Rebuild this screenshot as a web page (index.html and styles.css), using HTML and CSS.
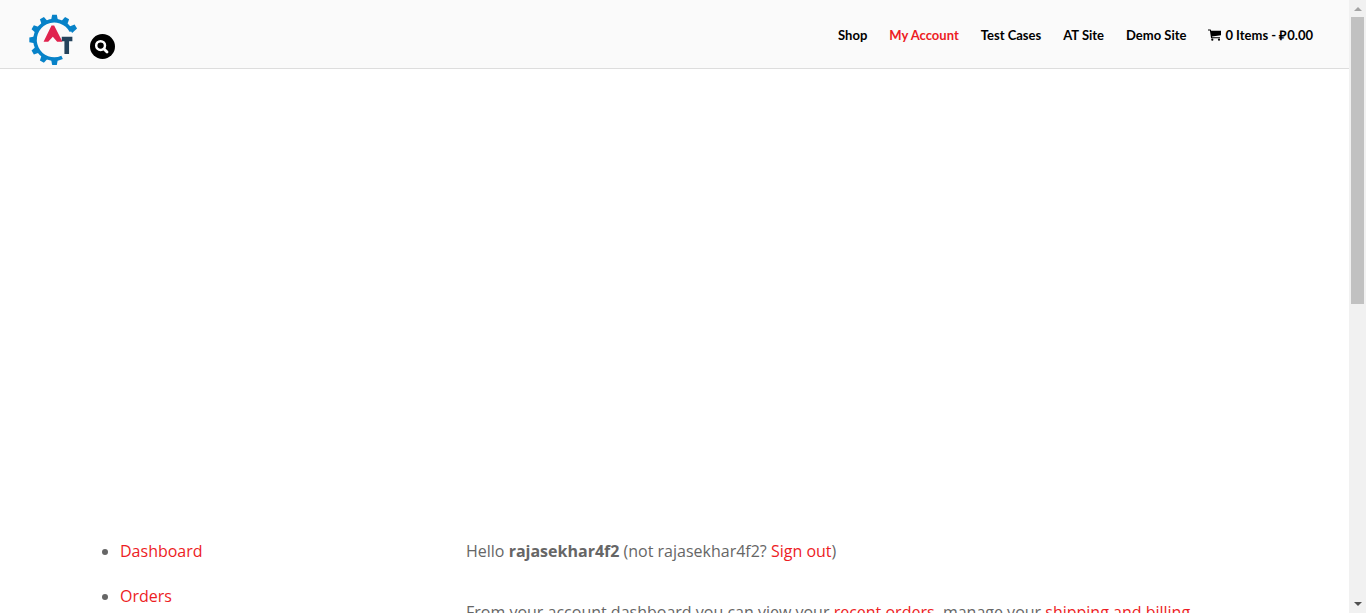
FILE: index.html
```html
<!DOCTYPE html>
<html lang="en">
<head>
<meta charset="utf-8">
<title>My Account</title>
<link rel="stylesheet" href="styles.css">
</head>
<body>
<div class="page">
  <header class="header">
    <div class="brand">
      <a class="logo" href="#" aria-label="AT home">
        <svg viewBox="12 13 148 154" aria-hidden="true">
          <path d="M112 144A58 58 0 1 1 140 65" fill="none" stroke="#0782c8" stroke-width="11"/>
          <g fill="#0782c8">
            <path id="tooth" d="M78 35L82 15h14l4 20z"/>
            <use href="#tooth" transform="rotate(30 89 91)"/>
            <use href="#tooth" transform="rotate(58 89 91)"/>
            <use href="#tooth" transform="rotate(-30 89 91)"/>
            <use href="#tooth" transform="rotate(-60 89 91)"/>
            <use href="#tooth" transform="rotate(-90 89 91)"/>
            <use href="#tooth" transform="rotate(-120 89 91)"/>
            <use href="#tooth" transform="rotate(-150 89 91)"/>
            <use href="#tooth" transform="rotate(-180 89 91)"/>
          </g>
          <path d="M56 97L80 48h8l25 49H97L84 82 70 97z" fill="#e0234e"/>
          <path d="M111 82h32v13h-10v39h-14V95h-8z" fill="#24435c"/>
        </svg>
      </a>
      <button class="search" type="button" aria-label="Search">
        <svg viewBox="0 0 25 25" aria-hidden="true">
          <circle cx="10.6" cy="11.6" r="4.4" fill="none" stroke="#fff" stroke-width="2.5"/>
          <path d="M14 15l3 3" stroke="#fff" stroke-width="2.8" stroke-linecap="round"/>
        </svg>
      </button>
    </div>
    <nav class="menu">
      <a href="#">Shop</a>
      <a class="current" href="#">My Account</a>
      <a href="#">Test Cases</a>
      <a href="#">AT Site</a>
      <a href="#">Demo Site</a>
      <a class="cart" href="#">
        <svg viewBox="0 0 13 12" aria-hidden="true">
          <path d="M0 .5h2.4q.5 0 .6.5l.1.7H13v4.6L4 7.5l.2.8H12v1H3.6q-.6 0-.6-.5L1.9 1.5H0z"/>
          <circle cx="4.3" cy="10.7" r="1.1"/><circle cx="11" cy="10.7" r="1.1"/>
        </svg>
        <span>0 Items - ₽0.00</span>
      </a>
    </nav>
  </header>
  <main class="account">
    <ul class="sections">
      <li><a href="#">Dashboard</a></li>
      <li><a href="#">Orders</a></li>
    </ul>
    <div class="content">
      <p>Hello <strong>rajasekhar4f2</strong> (not rajasekhar4f2? <a href="#">Sign out</a>)</p>
      <p>From your account dashboard you can view your <a href="#">recent orders</a>, manage your <a href="#">shipping and billing addresses</a></p>
    </div>
  </main>
</div>
<div class="scrollbar" aria-hidden="true">
  <svg class="arrow" viewBox="0 0 17 17"><path d="M5 11h8L9 7z" fill="#a3a3a3"/></svg>
  <div class="track"><div class="thumb"></div></div>
  <svg class="arrow" viewBox="0 0 17 17"><path d="M5 6h8L9 10z" fill="#505050"/></svg>
</div>
</body>
</html>
```
FILE: styles.css
```css
* {
  box-sizing: border-box;
}

body {
  display: flex;
  height: 100vh;
  margin: 0;
  overflow: hidden;
  background: #fff;
  color: #666;
  font: 400 16px/26px "Open Sans", sans-serif;
}

a {
  color: #ed1c24;
  text-decoration: none;
}

.page {
  flex: 1;
  min-width: 0;
  overflow: hidden;
}

.header {
  display: flex;
  justify-content: space-between;
  align-items: flex-start;
  padding: 14px 36px 3px 29px;
  border-bottom: 1px solid #ddd;
  background: #fafafa;
}

.brand {
  display: flex;
  align-items: flex-end;
  gap: 12px;
}

.logo svg {
  display: block;
  width: 49px;
  height: 51px;
}

.search {
  width: 25px;
  height: 25px;
  margin-bottom: 6px;
  padding: 0;
  border: 0;
  border-radius: 50%;
  background: #000;
}

.search svg {
  display: block;
}

.menu {
  display: flex;
  gap: 22px;
  padding-top: 11px;
  font: 700 13px/20px Lato, "Open Sans", sans-serif;
}

.menu a {
  color: #000;
}

.menu .current {
  color: #ed1c24;
}

.menu .cart {
  display: flex;
  align-items: center;
  gap: 4px;
}

.cart svg {
  width: 13px;
  height: 12px;
}

.account {
  display: grid;
  grid-template-columns: 386fr 803fr;
  padding: 469px 80px 0;
}

.sections {
  margin: 0;
  padding-left: 40px;
}

.sections li {
  margin-bottom: 19px;
}

.content {
  padding-right: 32px;
}

.content p {
  margin: 0 0 35px;
}

.content strong {
  font-weight: 700;
}

.scrollbar {
  display: flex;
  flex-direction: column;
  width: 17px;
  background: #f1f1f1;
}

.arrow {
  display: block;
  width: 17px;
  height: 17px;
}

.track {
  flex: 1;
  padding: 0 2px;
}

.thumb {
  height: 287px;
  background: #c1c1c1;
}
```
